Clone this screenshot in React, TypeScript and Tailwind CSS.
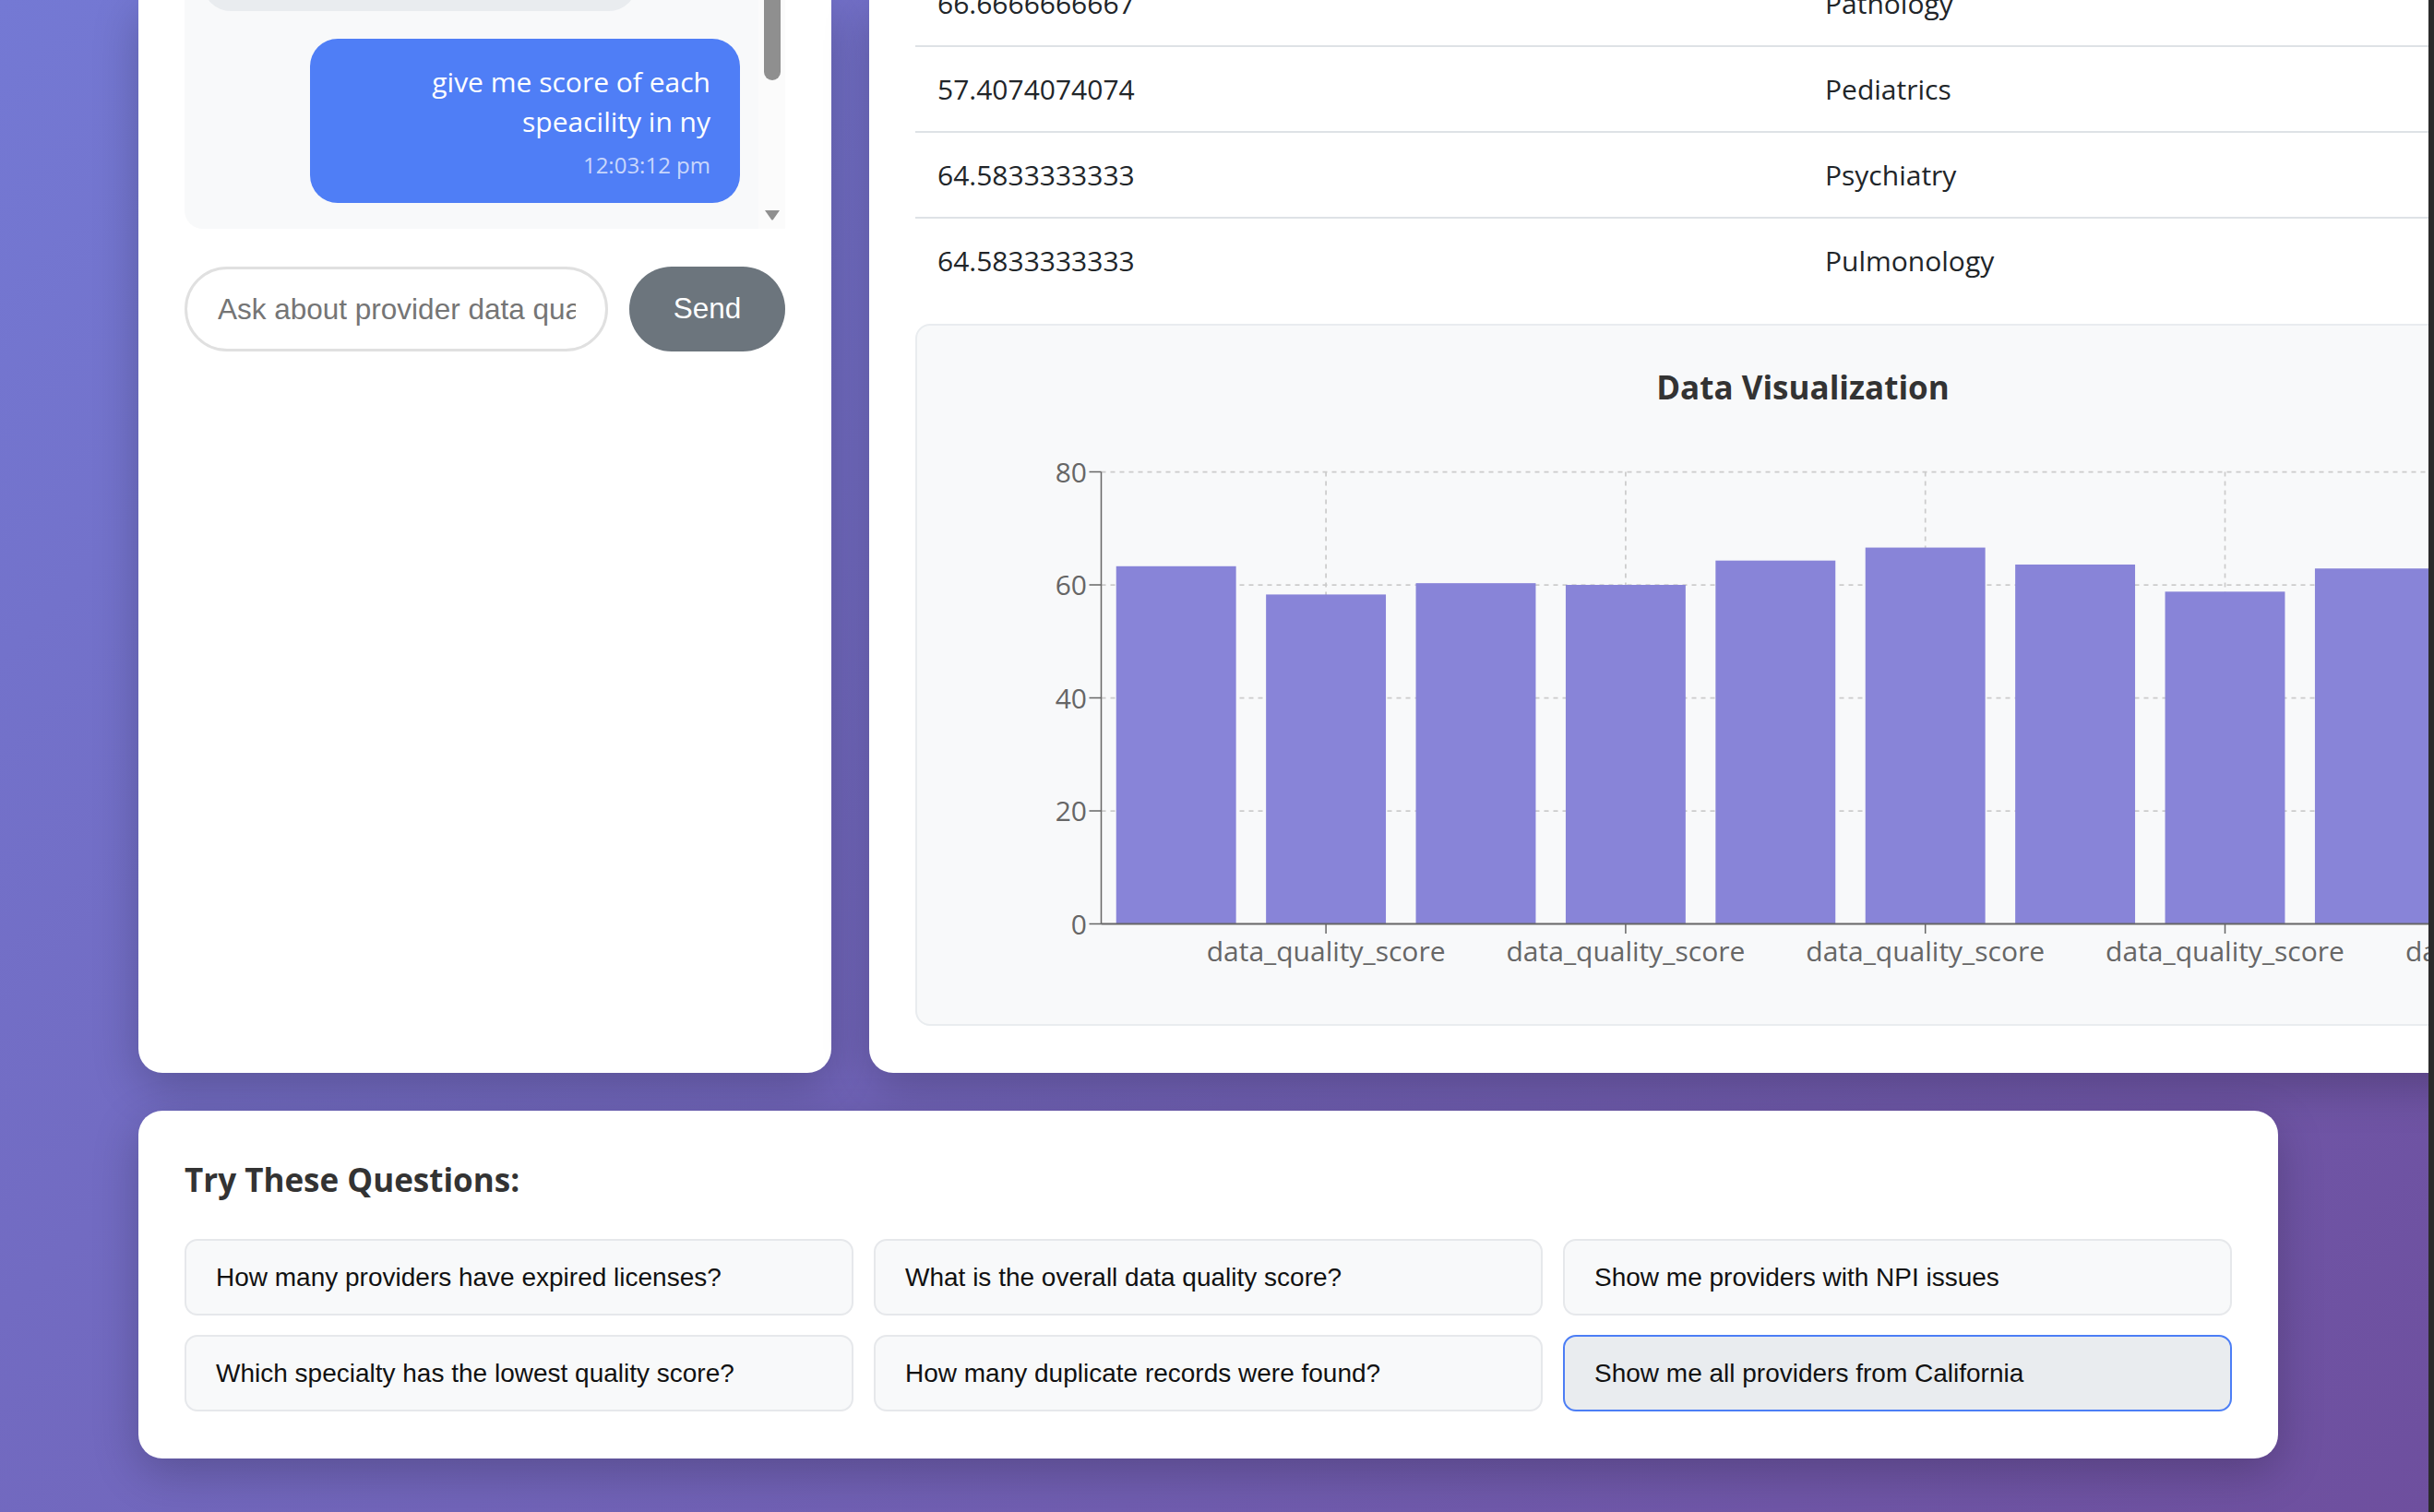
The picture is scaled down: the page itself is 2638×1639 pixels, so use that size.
import React from "react";

const bars = [63.3, 58.3, 60.3, 60.0, 64.3, 66.6, 63.6, 58.8, 62.9, 61.0];

function Chart() {
  const axisX = 199.5;
  const y0 = 531.5;
  const unit = 6.125;
  const band = 162.4;
  const plotEnd = axisX + band * bars.length;
  const yv = (v: number) => y0 - v * unit;
  const tickIdx = [1, 3, 5, 7, 9];
  return (
    <svg width={1920} height={620} className="block" fontFamily="'Open Sans', sans-serif">
      {[80, 60, 40, 20].map((v) => (
        <line key={v} x1={axisX} x2={plotEnd} y1={yv(v)} y2={yv(v)} stroke="#ccc" strokeWidth={1.75} strokeDasharray="5 5" />
      ))}
      {tickIdx.map((i) => {
        const x = axisX + band * (i + 0.5);
        return <line key={i} x1={x} x2={x} y1={yv(80)} y2={y0} stroke="#ccc" strokeWidth={1.75} strokeDasharray="5 5" />;
      })}
      {bars.map((v, i) => (
        <rect key={i} x={axisX + i * band + 16.24} y={yv(v)} width={129.9} height={v * unit} fill="#8884d8" />
      ))}
      <line x1={axisX} x2={axisX} y1={yv(80)} y2={y0} stroke="#666" strokeWidth={1.5} />
      <line x1={axisX} x2={plotEnd} y1={y0} y2={y0} stroke="#666" strokeWidth={2} />
      {[0, 20, 40, 60, 80].map((v) => (
        <g key={v}>
          <line x1={186.5} x2={axisX} y1={yv(v)} y2={yv(v)} stroke="#666" strokeWidth={1.5} />
          <text x={184} y={yv(v) + 11} textAnchor="end" fontSize={30} fill="#666">
            {v}
          </text>
        </g>
      ))}
      {tickIdx.map((i) => {
        const x = axisX + band * (i + 0.5);
        return (
          <g key={i}>
            <line x1={x} x2={x} y1={y0} y2={y0 + 10.5} stroke="#666" strokeWidth={1.5} />
            <text x={x} y={571.5} textAnchor="middle" fontSize={30} fill="#666">
              data_quality_score
            </text>
          </g>
        );
      })}
    </svg>
  );
}

const rows: [string, string][] = [
  ["66.6666666667", "Pathology"],
  ["57.4074074074", "Pediatrics"],
  ["64.5833333333", "Psychiatry"],
  ["64.5833333333", "Pulmonology"],
];

const questions = [
  "How many providers have expired licenses?",
  "What is the overall data quality score?",
  "Show me providers with NPI issues",
  "Which specialty has the lowest quality score?",
  "How many duplicate records were found?",
  "Show me all providers from California",
];

export default function App() {
  return (
    <div className="flex h-[1639px] w-[2638px] overflow-hidden font-['Open_Sans',sans-serif]">
      <div className="flex-1 overflow-hidden bg-[linear-gradient(135deg,#7479d4_0%,#6e4f9e_100%)]">
        <div className="flex flex-col gap-[41px] pl-[150px]">
          <div className="flex h-[1163px] gap-[41px]">
            {/* Chat panel */}
            <div className="w-[751px] shrink-0 rounded-b-[26px] bg-white px-[50px] shadow-[0_15px_50px_rgba(0,0,0,0.22)]">
              <div className="flex h-[248px] overflow-hidden rounded-bl-[20px] bg-[#f8f9fa]">
                <div className="flex flex-1 flex-col justify-end gap-[30px] overflow-hidden px-[20px] pb-[28px]">
                  <div className="h-[120px] w-[470px] shrink-0 self-start rounded-[30px] bg-[#e9ecef]" />
                  <div className="max-w-[80%] shrink-0 self-end rounded-[30px] bg-[#4f7ef6] px-[32px] py-[25px] text-right text-white">
                    <div className="text-[30px] leading-[43px]">give me score of each speacility in ny</div>
                    <div className="mt-[10px] text-[24px] leading-[32px] text-white/70">12:03:12 pm</div>
                  </div>
                </div>
                <div className="flex w-[29px] flex-col items-center justify-between bg-[#fbfbfb] pb-[9px]">
                  <div className="h-[87px] w-[18px] rounded-b-[9px] bg-[#8f8f8f]" />
                  <svg width="18" height="12" viewBox="0 0 18 12">
                    <path d="M1 1 H17 L10 11 Q9 12.2 8 11 Z" fill="#8f8f8f" />
                  </svg>
                </div>
              </div>
              <div className="mt-[41px] flex gap-[23px]">
                <input
                  placeholder="Ask about provider data quality..."
                  className="h-[92px] w-[459px] rounded-full border-[3px] border-[#e0e0e0] bg-white pl-[33px] pr-[32px] font-['Liberation_Sans',Arial,sans-serif] text-[31.5px] text-[#333] outline-none placeholder:text-[#757575]"
                />
                <button className="h-[92px] w-[169px] rounded-full bg-[#6c757d] font-['Liberation_Sans',Arial,sans-serif] text-[31.5px] text-white">
                  Send
                </button>
              </div>
            </div>
            {/* Results panel */}
            <div className="w-[2024px] shrink-0 rounded-b-[26px] bg-white px-[50px] shadow-[0_15px_50px_rgba(0,0,0,0.22)]">
              <div className="overflow-hidden">
                <div className="-mt-[42px]">
                  {rows.map(([score, spec], i) => (
                    <div
                      key={i}
                      className={
                        i < rows.length - 1
                          ? "flex h-[93px] items-center border-b-2 border-[#dee2e6] text-[30px] text-[#212529]"
                          : "flex h-[91px] items-center text-[30px] text-[#212529]"
                      }
                    >
                      <div className="w-[962px] pl-[24px]">{score}</div>
                      <div className="w-[962px] pl-[24px]">{spec}</div>
                    </div>
                  ))}
                </div>
              </div>
              <div className="mt-[23px] h-[761px] w-[1924px] rounded-[16px] border-2 border-[#e9ecef] bg-[#f8f9fa] pt-[43px]">
                <div className="text-center text-[35px] font-bold leading-[48px] text-[#333]">Data Visualization</div>
                <div className="mt-[26px]">
                  <Chart />
                </div>
              </div>
            </div>
          </div>
          {/* Questions */}
          <div className="h-[377px] w-[2319px] rounded-[26px] bg-white px-[50px] pt-[51px] shadow-[0_15px_50px_rgba(0,0,0,0.22)]">
            <h3 className="text-[35px] font-bold leading-[48px] text-[#333]">Try These Questions:</h3>
            <div className="mt-[40px] grid grid-cols-3 gap-x-[22px] gap-y-[21px]">
              {questions.map((q, i) => (
                <button
                  key={i}
                  className={
                    i === 5
                      ? "h-[83px] rounded-[14px] border-2 border-[#4c7ef5] bg-[#e9ecef] pl-[32px] text-left font-['Liberation_Sans',Arial,sans-serif] text-[28px] text-[#111]"
                      : "h-[83px] rounded-[14px] border-2 border-[#e6e8eb] bg-[#f8f9fa] pl-[32px] text-left font-['Liberation_Sans',Arial,sans-serif] text-[28px] text-[#111]"
                  }
                >
                  {q}
                </button>
              ))}
            </div>
          </div>
        </div>
      </div>
      <div className="w-[6px] shrink-0 bg-[#2b2b2b]" />
    </div>
  );
}
